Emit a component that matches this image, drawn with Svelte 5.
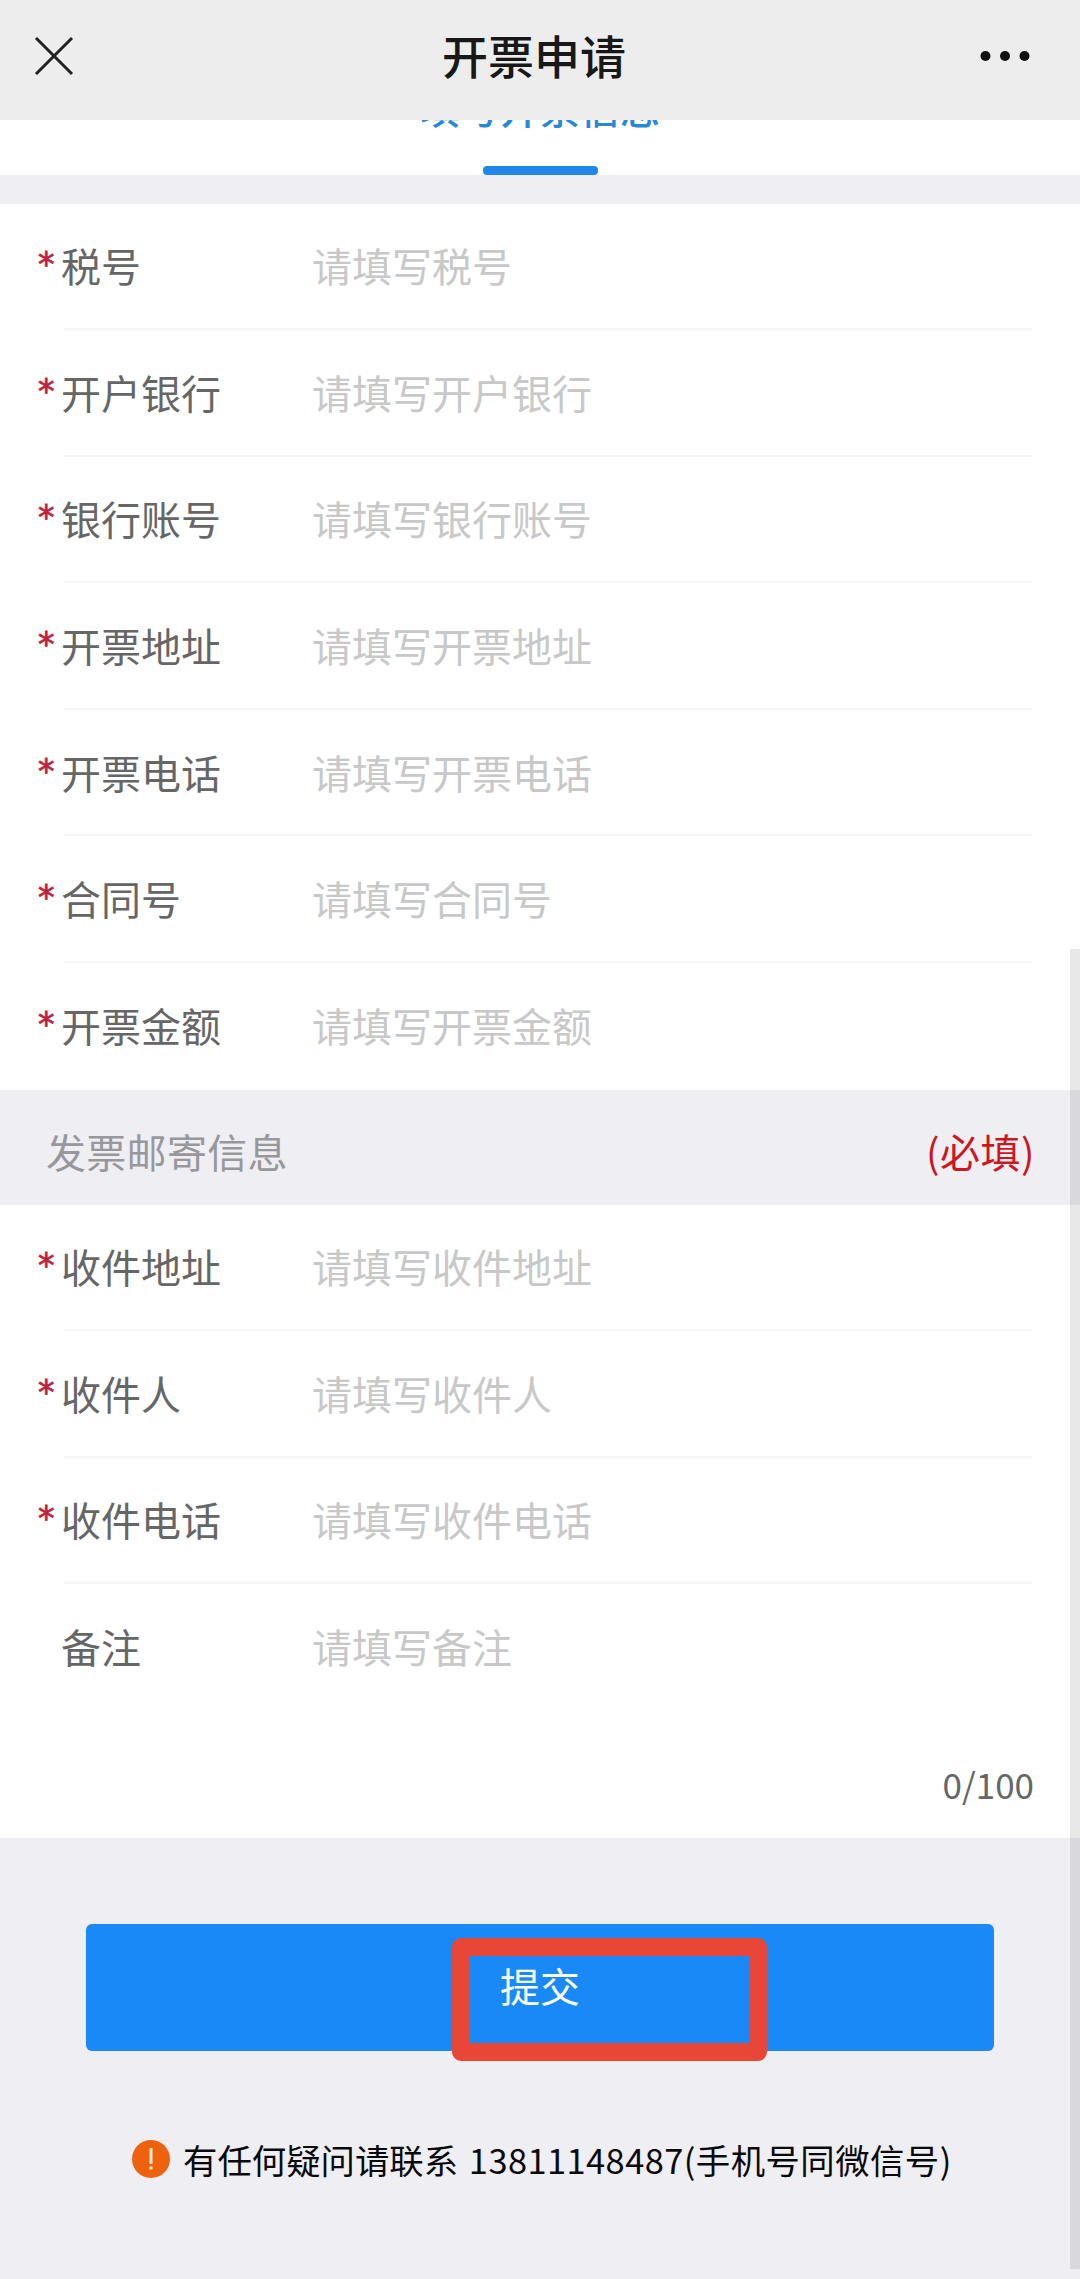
<script>
  const invoiceFields = ['税号', '开户银行', '银行账号', '开票地址', '开票电话', '合同号', '开票金额'];
  const mailFields = ['收件地址', '收件人', '收件电话'];
  const maxLength = 100;

  let values = $state({});
  let remark = $state('');
</script>

{#snippet field(name)}
  <label class="field">
    <span class="star">*</span>
    <span class="name">{name}</span>
    <input type="text" placeholder={`请填写${name}`} bind:value={values[name]} />
  </label>
{/snippet}

<div class="page">
  <header>
    <svg class="close" viewBox="0 0 40 40" aria-label="关闭">
      <path d="M2 2 38 38M38 2 2 38" />
    </svg>
    <h1>开票申请</h1>
    <svg class="more" viewBox="0 0 50 12" aria-label="更多">
      <circle cx="5.5" cy="6" r="5" />
      <circle cx="25" cy="6" r="5" />
      <circle cx="44.5" cy="6" r="5" />
    </svg>
  </header>

  <div class="tabs">
    <span class="tab">填写开票信息</span>
    <i></i>
  </div>

  <section class="group invoice">
    {#each invoiceFields as name}
      {@render field(name)}
    {/each}
  </section>

  <div class="section-title">
    <span>发票邮寄信息</span>
    <em>(必填)</em>
  </div>

  <section class="group mail">
    {#each mailFields as name}
      {@render field(name)}
    {/each}
    <label class="field remark">
      <span class="star"></span>
      <span class="name">备注</span>
      <input type="text" placeholder="请填写备注" maxlength={maxLength} bind:value={remark} />
    </label>
    <p class="count">{remark.length}/{maxLength}</p>
  </section>

  <div class="actions">
    <button type="button">提交</button>
    <div class="highlight"></div>
  </div>

  <p class="contact">
    <svg viewBox="0 0 38 38">
      <circle cx="19" cy="19" r="19" />
      <path d="M19 8v16M19 26.5v3" />
    </svg>
    <span>有任何疑问请联系 <span class="phone">13811148487(手机号同微信号)</span></span>
  </p>

  <div class="scrollbar"></div>
</div>

<style>
  :global(body) {
    margin: 0;
    background: #eeeef3;
  }

  .page {
    position: relative;
    width: 1080px;
    height: 2279px;
    overflow: hidden;
    background: #eeeef3;
    color: #666;
    font-family: 'Noto Sans CJK SC', sans-serif;
    font-size: 40px;
    line-height: 60px;
  }

  header {
    display: flex;
    box-sizing: border-box;
    height: 120px;
    padding: 0 50px 8px 34px;
    align-items: center;
    justify-content: space-between;
    background: #ededed;
  }

  h1 {
    margin: 0 0 4px 14px;
    color: #181818;
    font-size: 46px;
    font-weight: 500;
    line-height: 64px;
  }

  .close {
    width: 40px;
    height: 40px;
    fill: none;
    stroke: #222;
    stroke-width: 3;
  }

  .more {
    width: 50px;
    height: 12px;
    fill: #111;
  }

  .tabs {
    display: flex;
    height: 55px;
    overflow: hidden;
    flex-direction: column;
    align-items: center;
    justify-content: flex-end;
    background: #fff;
  }

  .tab {
    margin-bottom: 29px;
    color: #2788d8;
    font-weight: 500;
  }

  .tabs i {
    width: 115px;
    height: 9px;
    flex: none;
    border-radius: 4px;
    background: #2087e8;
  }

  .group {
    background: #fff;
  }

  .invoice {
    height: 886px;
    margin-top: 29px;
  }

  .mail {
    height: 633px;
  }

  .field {
    position: relative;
    display: flex;
    box-sizing: border-box;
    height: 126.6px;
    padding: 0 48px 4px 38px;
    align-items: center;
  }

  .field::after {
    position: absolute;
    right: 48px;
    bottom: 0.5px;
    left: 64px;
    height: 2px;
    background: #f5f5f6;
    content: '';
  }

  .invoice .field:last-child::after,
  .remark::after {
    display: none;
  }

  .star {
    width: 23px;
    color: #c01f3a;
    font-family: 'DejaVu Sans', sans-serif;
    font-size: 33px;
    -webkit-text-stroke: 0.8px #c01f3a;
  }

  .name {
    width: 251px;
  }

  input {
    min-width: 0;
    padding: 0;
    flex: 1;
    border: 0;
    outline: 0;
    background: transparent;
    color: #666;
    font: inherit;
  }

  input::placeholder {
    color: #c8c8c8;
    opacity: 1;
  }

  .count {
    margin: 43px 46px 0 0;
    font-size: 35px;
    text-align: right;
  }

  .section-title {
    display: flex;
    box-sizing: border-box;
    height: 115px;
    padding: 7px 45px 0 46px;
    align-items: center;
    justify-content: space-between;
    color: #98989c;
    letter-spacing: 0.3px;
  }

  .section-title em {
    color: #cc1720;
    font-style: normal;
    letter-spacing: 0.5px;
  }

  .actions {
    position: relative;
    padding: 86px 86px 0;
  }

  button {
    display: block;
    width: 100%;
    height: 127px;
    padding: 0 0 6px;
    border: 0;
    border-radius: 6px;
    background: #1a89f8;
    color: #fff;
    font: inherit;
  }

  .highlight {
    position: absolute;
    top: 100px;
    left: 452px;
    box-sizing: border-box;
    width: 315px;
    height: 123px;
    border: 18px solid #e84636;
    border-radius: 9px;
  }

  .contact {
    display: flex;
    margin: 78px 0 0;
    padding-left: 132px;
    align-items: center;
    color: #0a0a0c;
    font-size: 34.4px;
    white-space: nowrap;
    word-spacing: 3px;
  }

  .contact svg {
    width: 38px;
    height: 38px;
    margin-right: 13px;
    fill: #ee610d;
  }

  .contact path {
    stroke: #ffe9d0;
    stroke-width: 3;
  }

  .phone {
    letter-spacing: 0.45px;
  }

  .scrollbar {
    position: absolute;
    top: 949px;
    right: 0;
    width: 10px;
    height: 1320px;
    background: rgba(0, 0, 0, 0.09);
  }
</style>
